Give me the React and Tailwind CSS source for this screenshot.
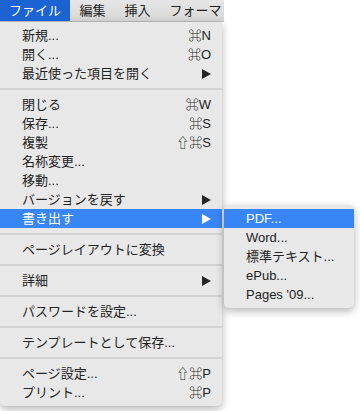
import React from 'react';

const font = { fontFamily: '"Liberation Sans", "Noto Sans CJK JP", "DejaVu Sans", sans-serif' };

const Arrow = ({ white }) => (
    <svg width="9" height="10" viewBox="0 0 9 10" className="block">
        <path d="M0 0 L9 5 L0 10 Z" fill={white ? '#ffffff' : '#262626'} />
    </svg>
);

const items = [
    { label: '新規...', key: '⌘N' },
    { label: '開く...', key: '⌘O' },
    { label: '最近使った項目を開く', sub: true },
    { sep: true },
    { label: '閉じる', key: '⌘W' },
    { label: '保存...', key: '⌘S' },
    { label: '複製', key: '⇧⌘S' },
    { label: '名称変更...' },
    { label: '移動...' },
    { label: 'バージョンを戻す', sub: true },
    { label: '書き出す', sub: true, active: true },
    { sep: true },
    { label: 'ページレイアウトに変換' },
    { sep: true },
    { label: '詳細', sub: true },
    { sep: true },
    { label: 'パスワードを設定...' },
    { sep: true },
    { label: 'テンプレートとして保存...' },
    { sep: true },
    { label: 'ページ設定...', key: '⇧⌘P' },
    { label: 'プリント...', key: '⌘P' },
];

const exportItems = ['PDF...', 'Word...', '標準テキスト...', 'ePub...', "Pages '09..."];

const MenuRow = ({ item }) => {
    if (item.sep) {
        return (
            <div className="h-[12px] flex items-center">
                <div className="w-full h-[2px] bg-[#d3d3d3]"></div>
            </div>
        );
    }
    return (
        <div className={`h-[19px] flex items-center justify-between pl-[22px] pr-[11px] ${
            item.active ? 'bg-[#3886f6] text-white' : 'text-[#232323]'
        }`}>
            <span>{item.label}</span>
            {item.key && <span>{item.key}</span>}
            {item.sub && <Arrow white={item.active} />}
        </div>
    );
};

const App = () => {
    return (
        <div className="w-[360px] h-[411px] bg-white relative overflow-hidden text-[13px] leading-none" style={font}>
            {/* Menu bar */}
            <div className="w-[224px] h-[22px] flex overflow-hidden whitespace-nowrap bg-gradient-to-b from-[#e6e6e6] to-[#d7d7d7] border-b border-[#bdbdbd] text-[#222]">
                <div className="px-[9px] h-full flex items-center bg-[#1b62d3] text-white">ファイル</div>
                <div className="px-[9.5px] h-full flex items-center">編集</div>
                <div className="px-[9.5px] h-full flex items-center">挿入</div>
                <div className="px-[9.5px] h-full flex items-center">フォーマット</div>
            </div>

            {/* File menu */}
            <div className="w-[222px] bg-[#e8e8e8] rounded-b-[5px] pt-[4px] pb-[4px] shadow-[0_3px_8px_rgba(0,0,0,0.3)]">
                {items.map((item, i) => (
                    <MenuRow key={i} item={item} />
                ))}
            </div>

            {/* Export submenu */}
            <div className="absolute left-[224px] top-[205px] w-[130px] bg-[#e8e8e8] rounded-[5px] pt-[4px] pb-[4px] shadow-[0_3px_8px_rgba(0,0,0,0.3)]">
                {exportItems.map((label, i) => (
                    <div key={i} className={`h-[19px] flex items-center pl-[22px] ${
                        i === 0 ? 'bg-[#3886f6] text-white' : 'text-[#232323]'
                    }`}>
                        {label}
                    </div>
                ))}
            </div>
        </div>
    );
};

export default App;
